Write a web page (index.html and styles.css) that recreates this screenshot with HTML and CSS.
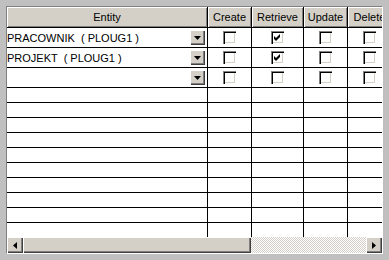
FILE: index.html
```html
<!DOCTYPE html>
<html>
	<head>
		<meta charset="UTF-8">
		<title>Entity grid</title>
		<link rel="stylesheet" href="styles.css">
	</head>
	<body>
		<div class="win">
			<div class="view">
				<div class="row head">
					<div class="cell">Entity</div>
					<div class="cell">Create</div>
					<div class="cell">Retrieve</div>
					<div class="cell">Update</div>
					<div class="cell">Delete</div>
				</div>

				<div class="row big">
					<div class="cell entity"><span class="name">PRACOWNIK  ( PLOUG1 )</span><span class="drop"><svg width="7" height="4" viewBox="0 0 7 4"><path d="M0 0h7L3.5 4z" fill="#000"/></svg></span></div>
					<div class="cell"><span class="chk"></span></div>
					<div class="cell"><span class="chk on"><svg width="13" height="13" viewBox="0 0 13 13"><path d="M3 5 L5 7 L9 3 L9 6 L5 10 L3 8 Z" fill="#000"/></svg></span></div>
					<div class="cell"><span class="chk"></span></div>
					<div class="cell"><span class="chk"></span></div>
				</div>
				<div class="row big">
					<div class="cell entity"><span class="name">PROJEKT  ( PLOUG1 )</span><span class="drop"><svg width="7" height="4" viewBox="0 0 7 4"><path d="M0 0h7L3.5 4z" fill="#000"/></svg></span></div>
					<div class="cell"><span class="chk"></span></div>
					<div class="cell"><span class="chk on"><svg width="13" height="13" viewBox="0 0 13 13"><path d="M3 5 L5 7 L9 3 L9 6 L5 10 L3 8 Z" fill="#000"/></svg></span></div>
					<div class="cell"><span class="chk"></span></div>
					<div class="cell"><span class="chk"></span></div>
				</div>
				<div class="row big">
					<div class="cell entity"><span class="name"></span><span class="drop"><svg width="7" height="4" viewBox="0 0 7 4"><path d="M0 0h7L3.5 4z" fill="#000"/></svg></span></div>
					<div class="cell"><span class="chk"></span></div>
					<div class="cell"><span class="chk"></span></div>
					<div class="cell"><span class="chk"></span></div>
					<div class="cell"><span class="chk"></span></div>
				</div>

				<div class="row"><div class="cell"></div><div class="cell"></div><div class="cell"></div><div class="cell"></div><div class="cell"></div></div>
				<div class="row"><div class="cell"></div><div class="cell"></div><div class="cell"></div><div class="cell"></div><div class="cell"></div></div>
				<div class="row"><div class="cell"></div><div class="cell"></div><div class="cell"></div><div class="cell"></div><div class="cell"></div></div>
				<div class="row"><div class="cell"></div><div class="cell"></div><div class="cell"></div><div class="cell"></div><div class="cell"></div></div>
				<div class="row"><div class="cell"></div><div class="cell"></div><div class="cell"></div><div class="cell"></div><div class="cell"></div></div>
				<div class="row"><div class="cell"></div><div class="cell"></div><div class="cell"></div><div class="cell"></div><div class="cell"></div></div>
				<div class="row"><div class="cell"></div><div class="cell"></div><div class="cell"></div><div class="cell"></div><div class="cell"></div></div>
				<div class="row"><div class="cell"></div><div class="cell"></div><div class="cell"></div><div class="cell"></div><div class="cell"></div></div>
				<div class="row"><div class="cell"></div><div class="cell"></div><div class="cell"></div><div class="cell"></div><div class="cell"></div></div>
				<div class="row"><div class="cell"></div><div class="cell"></div><div class="cell"></div><div class="cell"></div><div class="cell"></div></div>
				<div class="row"><div class="cell"></div><div class="cell"></div><div class="cell"></div><div class="cell"></div><div class="cell"></div></div>
			</div>

			<div class="hscroll">
				<div class="sb-btn"><svg width="4" height="7" viewBox="0 0 4 7"><path d="M4 0v7L0 3.5z" fill="#000"/></svg></div>
				<div class="sb-thumb"></div>
				<div class="sb-track"></div>
				<div class="sb-btn"><svg width="4" height="7" viewBox="0 0 4 7"><path d="M0 0v7l4-3.5z" fill="#000"/></svg></div>
			</div>
		</div>
	</body>
</html>
```

FILE: styles.css
```css
*{margin: 0;padding: 0;box-sizing: border-box;}
html,body{width: 389px;height: 260px;overflow: hidden;}
body{background: #c0c0c0;padding: 6px;font-family: "Liberation Sans", Arial, sans-serif;font-size: 11px;color: #000;}

.win{width: 377px;height: 248px;border: 1px solid;border-color: #808080 #fff #fff #808080;background: #fff;display: flex;flex-direction: column;}
.view{height: 230px;overflow: hidden;}

.row{display: grid;grid-template-columns: 201px 44px 52px 44px 44px;height: 15px;width: max-content;}
.row.big{height: 20px;}
.cell{border-right: 1px solid #000;border-bottom: 1px solid #000;display: flex;align-items: center;justify-content: center;overflow: hidden;}

.head{height: 21px;}
.head .cell{background: #d4d0c8;box-shadow: inset 1px 1px 0 #fff, inset -1px -1px 0 #808080;white-space: nowrap;}

.entity{justify-content: space-between;}
.name{white-space: pre;}
.drop{width: 15px;height: 15px;margin-right: 2px;background: #d4d0c8;display: flex;align-items: center;justify-content: center;box-shadow: inset 1px 1px 0 #fff, inset -1px -1px 0 #404040, inset -2px -2px 0 #808080;}

.chk{width: 13px;height: 13px;background: #fff;display: block;box-shadow: inset 1px 1px 0 #808080, inset 2px 2px 0 #000, inset -1px -1px 0 #fff, inset -2px -2px 0 #d4d0c8;}
.chk svg{display: block;}

.hscroll{height: 16px;display: flex;}
.sb-btn{width: 16px;height: 16px;background: #d4d0c8;display: flex;align-items: center;justify-content: center;box-shadow: inset 1px 1px 0 #fff, inset -1px -1px 0 #404040, inset -2px -2px 0 #808080;}
.sb-thumb{width: 228px;background: #d4d0c8;box-shadow: inset 1px 1px 0 #fff, inset -1px -1px 0 #404040, inset -2px -2px 0 #808080;}
.sb-track{flex: 1;background: repeating-conic-gradient(#fff 0 25%, #d4d0c8 0 50%) 0 0/2px 2px;}
```
